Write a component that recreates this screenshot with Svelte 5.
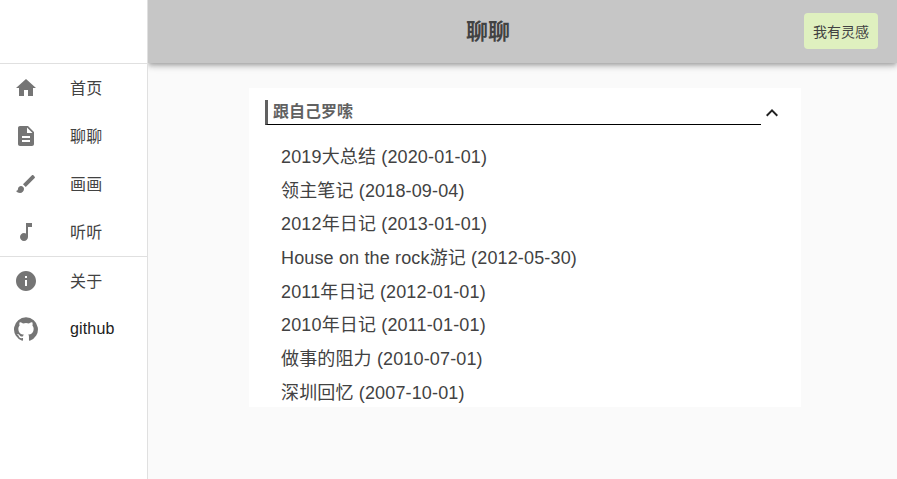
<script>
  const navTop = [
    { label: '首页', path: 'M10 20v-6h4v6h5v-8h3L12 3 2 12h3v8z' },
    { label: '聊聊', path: 'M14 2H6c-1.1 0-1.99.9-1.99 2L4 20c0 1.1.89 2 1.99 2H18c1.1 0 2-.9 2-2V8l-6-6zm2 16H8v-2h8v2zm0-4H8v-2h8v2zm-3-5V3.5L18.5 9H13z' },
    { label: '画画', path: 'M7 14c-1.66 0-3 1.34-3 3 0 1.31-1.16 2-2 2 .92 1.22 2.49 2 4 2 2.21 0 4-1.79 4-4 0-1.66-1.34-3-3-3zm13.71-9.37l-1.34-1.34c-.39-.39-1.02-.39-1.41 0L9 12.25 11.75 15l8.96-8.96c.39-.39.39-1.02 0-1.41z' },
    { label: '听听', path: 'M12 3v10.55c-.59-.34-1.27-.55-2-.55-2.21 0-4 1.79-4 4s1.79 4 4 4 4-1.79 4-4V7h4V3h-6z' }
  ];
  const infoPath = 'M12 2C6.48 2 2 6.48 2 12s4.48 10 10 10 10-4.48 10-10S17.52 2 12 2zm1 15h-2v-6h2v6zm0-8h-2V7h2v2z';
  const githubPath = 'M12 .3a12 12 0 0 0-3.8 23.38c.6.12.83-.26.83-.57l-.01-2.04c-3.34.72-4.04-1.61-4.04-1.61-.55-1.39-1.34-1.76-1.34-1.76-1.08-.74.09-.73.09-.73 1.2.09 1.84 1.24 1.84 1.24 1.07 1.83 2.81 1.3 3.5 1 .1-.78.42-1.31.76-1.61-2.67-.3-5.47-1.33-5.47-5.93 0-1.31.47-2.38 1.24-3.22-.14-.3-.54-1.52.1-3.18 0 0 1-.32 3.3 1.23a11.5 11.5 0 0 1 6 0c2.28-1.55 3.29-1.23 3.29-1.23.64 1.66.24 2.88.12 3.18a4.65 4.65 0 0 1 1.23 3.22c0 4.61-2.8 5.63-5.48 5.92.42.36.81 1.1.81 2.22l-.01 3.29c0 .31.2.69.82.57A12 12 0 0 0 12 .3';

  const posts = [
    '2019大总结 (2020-01-01)',
    '领主笔记 (2018-09-04)',
    '2012年日记 (2013-01-01)',
    'House on the rock游记 (2012-05-30)',
    '2011年日记 (2012-01-01)',
    '2010年日记 (2011-01-01)',
    '做事的阻力 (2010-07-01)',
    '深圳回忆 (2007-10-01)'
  ];
</script>

<div class="app">
  <nav class="sidebar">
    <div class="logo"></div>
    <ul class="group">
      {#each navTop as item}
        <li class="nav-item">
          <svg class="icon" viewBox="0 0 24 24"><path d={item.path} /></svg>
          <span class="cjk">{item.label}</span>
        </li>
      {/each}
    </ul>
    <ul class="group">
      <li class="nav-item">
        <svg class="icon" viewBox="0 0 24 24"><path d={infoPath} /></svg>
        <span class="cjk">关于</span>
      </li>
      <li class="nav-item dark">
        <svg class="icon" viewBox="0 0 24 24"><path d={githubPath} /></svg>
        <span>github</span>
      </li>
    </ul>
  </nav>

  <div class="content">
    <header class="toolbar">
      <h1>聊聊</h1>
      <button class="idea">我有灵感</button>
    </header>

    <main class="main">
      <section class="card">
        <div class="card-head">
          <h2>跟自己罗嗦</h2>
          <svg class="chevron" viewBox="0 0 24 24"><path d="M7.41 15.41L12 10.83l4.59 4.58L18 14l-6-6-6 6z" /></svg>
        </div>
        <ul class="posts">
          {#each posts as post}
            <li>{post}</li>
          {/each}
        </ul>
      </section>
    </main>
  </div>
</div>

<style>
  :global(body) {
    margin: 0;
    background: #fafafa;
  }

  .app {
    display: flex;
    height: 479px;
    overflow: hidden;
    font-family: "Liberation Sans", "Noto Sans CJK SC", sans-serif;
    color: rgba(0, 0, 0, 0.87);
  }

  ul {
    list-style: none;
    margin: 0;
    padding: 0;
  }

  .sidebar {
    position: relative;
    z-index: 2;
    width: 147px;
    flex-shrink: 0;
    background: #fff;
    border-right: 1px solid #e0e0e0;
  }

  .logo {
    height: 63px;
  }

  .group {
    border-top: 1px solid #e0e0e0;
  }

  .nav-item {
    display: flex;
    align-items: center;
    height: 48px;
    padding-left: 14px;
    font-size: 16px;
    letter-spacing: 0.15px;
    color: #424242;
  }

  .nav-item.dark {
    color: #212121;
  }

  .cjk {
    padding-bottom: 2px;
  }

  .icon {
    width: 24px;
    height: 24px;
    margin-right: 32px;
    fill: #757575;
  }

  .content {
    flex: 1;
    min-width: 0;
    display: flex;
    flex-direction: column;
  }

  .toolbar {
    position: relative;
    height: 63px;
    flex-shrink: 0;
    display: flex;
    align-items: center;
    padding: 0 19px 0 24px;
    background: #c6c6c6;
    box-shadow: 0 2px 4px -1px rgba(0, 0, 0, 0.2), 0 4px 5px 0 rgba(0, 0, 0, 0.14), 0 1px 10px 0 rgba(0, 0, 0, 0.12);
  }

  h1 {
    flex: 1;
    margin: 0;
    padding-bottom: 5px;
    text-align: center;
    font-size: 22px;
    font-weight: 700;
    color: #424242;
  }

  .idea {
    width: 74px;
    height: 36px;
    margin-bottom: 1px;
    padding: 0;
    border: none;
    border-radius: 4px;
    background: #dff0bf;
    color: #424242;
    font: inherit;
    font-size: 14px;
  }

  .main {
    padding-top: 25px;
    display: flex;
    justify-content: center;
  }

  .card {
    width: 552px;
    height: 319px;
    margin-left: 5px;
    overflow: hidden;
    background: #fff;
    box-sizing: border-box;
    padding: 12px 17px 0 16px;
  }

  .card-head {
    display: flex;
    align-items: center;
    height: 25px;
  }

  h2 {
    flex: 1;
    margin: 0;
    height: 24px;
    line-height: 24px;
    border-left: 3px solid #616161;
    border-bottom: 1px solid #000;
    padding-left: 5px;
    font-size: 16px;
    font-weight: 700;
    color: #616161;
  }

  .chevron {
    width: 24px;
    height: 24px;
    margin-left: -1px;
    flex-shrink: 0;
    fill: #212121;
  }

  .posts {
    padding: 16px 0 0 16px;
  }

  .posts li {
    height: 33.7px;
    line-height: 33.7px;
    font-size: 18px;
    letter-spacing: 0.15px;
    color: #424242;
    white-space: nowrap;
  }
</style>
